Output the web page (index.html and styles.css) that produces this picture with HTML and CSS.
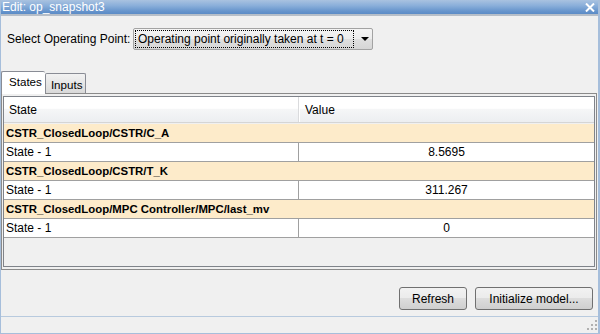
FILE: index.html
```html
<!DOCTYPE html>
<html>
<head>
<meta charset="utf-8">
<link rel="stylesheet" href="styles.css">
</head>
<body>
<div class="window">
  <div class="titlebar">
    <span class="title">Edit: op_snapshot3</span>
    <svg class="close" width="10" height="9" viewBox="0 0 10 9"><path d="M1 0.5 L9 8.5 M9 0.5 L1 8.5" stroke="#fff" stroke-width="2"/></svg>
  </div>
  <div class="body">
    <div class="op-row">
      <span class="op-label">Select Operating Point:</span>
      <div class="combo">
        <span class="combo-focus">Operating point originally taken at t = 0</span>
        <span class="combo-arrow"></span>
      </div>
    </div>
    <div class="tabs">
      <div class="tab active">States</div>
      <div class="tab">Inputs</div>
    </div>
    <div class="panel">
      <div class="grid">
        <div class="thead">
          <div class="th th-state">State</div>
          <div class="th th-value">Value</div>
        </div>
        <div class="group">CSTR_ClosedLoop/CSTR/C_A</div>
        <div class="row"><div class="cell">State - 1</div><div class="cell value">8.5695</div></div>
        <div class="group">CSTR_ClosedLoop/CSTR/T_K</div>
        <div class="row"><div class="cell">State - 1</div><div class="cell value">311.267</div></div>
        <div class="group">CSTR_ClosedLoop/MPC Controller/MPC/last_mv</div>
        <div class="row"><div class="cell">State - 1</div><div class="cell value">0</div></div>
      </div>
    </div>
    <div class="footer">
      <button class="btn btn-refresh">Refresh</button>
      <button class="btn btn-init">Initialize model...</button>
    </div>
  </div>
  <div class="statusbar">
    <svg class="grip" width="11" height="11" viewBox="0 0 11 11">
      <rect x="8" y="0" width="2" height="2" fill="#b0b0b0"/>
      <rect x="4" y="4" width="2" height="2" fill="#b0b0b0"/>
      <rect x="8" y="4" width="2" height="2" fill="#b0b0b0"/>
      <rect x="0" y="8" width="2" height="2" fill="#b0b0b0"/>
      <rect x="4" y="8" width="2" height="2" fill="#b0b0b0"/>
      <rect x="8" y="8" width="2" height="2" fill="#b0b0b0"/>
    </svg>
  </div>
</div>
</body>
</html>
```
FILE: styles.css
```css
html, body {
  margin: 0;
  padding: 0;
}
body {
  width: 600px;
  height: 334px;
  overflow: hidden;
  font-family: "Liberation Sans", Arial, sans-serif;
  font-size: 12px;
  color: #000;
  background: #f0f0f0;
}
.window {
  box-sizing: border-box;
  width: 600px;
  height: 334px;
  display: flex;
  flex-direction: column;
  border-left: 1px solid #a6bedb;
  border-right: 2px solid #a6bedb;
  border-bottom: 1px solid #a6bedb;
}
.titlebar {
  flex: none;
  height: 14px;
  border-bottom: 2px solid #b6bec8;
  background: linear-gradient(#a9c2e0, #8aafda 40%, #6694cc 80%, #5b8bc6);
  display: flex;
  align-items: center;
  justify-content: space-between;
  padding: 0 3px 0 1px;
  color: #fff;
  font-size: 12px;
}
.title {
  line-height: 14px;
}
.close {
  display: block;
  margin-top: 1px;
}
.body {
  flex: 1;
  display: flex;
  flex-direction: column;
}
.op-row {
  display: flex;
  align-items: center;
  margin-top: 12px;
  padding-left: 6px;
}
.op-label {
  width: 126px;
}
.combo {
  box-sizing: border-box;
  width: 240px;
  height: 22px;
  border: 1px solid #a3a3a3;
  border-radius: 2px;
  background: linear-gradient(#f4f4f4, #ececec 50%, #e0e0e0 50%, #d6d6d6);
  display: flex;
  align-items: center;
  padding: 1px;
}
.combo-focus {
  box-sizing: border-box;
  width: 219px;
  height: 18px;
  border: 1px dotted #000;
  padding-left: 2px;
  line-height: 16px;
  white-space: nowrap;
  overflow: hidden;
}
.combo-arrow {
  width: 0;
  height: 0;
  margin-left: 7px;
  border-top: 4px solid #000;
  border-left: 4px solid transparent;
  border-right: 4px solid transparent;
}
.tabs {
  display: flex;
  align-items: flex-end;
  height: 22px;
  margin-top: 21px;
  position: relative;
  z-index: 1;
}
.tab {
  box-sizing: border-box;
  height: 20px;
  border: 1px solid #898c95;
  border-bottom: none;
  border-radius: 2px 2px 0 0;
  padding: 3px 3px 0 5px;
  background: linear-gradient(#f2f2f2, #e6e6e6 50%, #d9d9d9);
  line-height: 16px;
  font-size: 11.6px;
}
.tab.active {
  height: 23px;
  margin-bottom: -1px;
  padding: 2px 3px 0 7px;
  background: #fff;
  border-right: none;
}
.panel {
  box-sizing: border-box;
  height: 177px;
  margin-right: 1px;
  border: 1px solid #8a8a8a;
  padding: 2px 1px 2px 1px;
  display: flex;
}
.grid {
  flex: 1;
  border: 1px solid #7f838a;
  background: #f0f0f0;
  display: flex;
  flex-direction: column;
}
.thead {
  display: flex;
  height: 25px;
  border-bottom: 1px solid #d5d5d5;
  margin-bottom: 1px;
  background: linear-gradient(#ffffff, #ffffff 45%, #f5f6f7 50%, #eceef1);
}
.th {
  line-height: 26px;
  padding-left: 5px;
}
.th-state {
  width: 289px;
  border-right: 1px solid #dadbdd;
}
.th-value {
  flex: 1;
  border-left: 1px solid #ffffff;
}
.group {
  height: 18px;
  line-height: 18px;
  border-bottom: 1px solid #a0a0a0;
  background: #fdebca;
  font-weight: bold;
  font-size: 11.4px;
  padding-left: 2px;
}
.row {
  display: flex;
  height: 18px;
  border-bottom: 1px solid #a0a0a0;
  background: #fff;
}
.cell {
  line-height: 18px;
  width: 292px;
  padding-left: 2px;
}
.cell.value {
  width: auto;
  flex: 1;
  padding-left: 0;
  border-left: 1px solid #a0a0a0;
  text-align: center;
}
.footer {
  display: flex;
  justify-content: flex-end;
  gap: 8px;
  margin-top: 17px;
  padding-right: 5px;
}
.btn {
  box-sizing: border-box;
  height: 23px;
  border: 1px solid #707070;
  border-radius: 3px;
  background: linear-gradient(#f2f2f2, #ebebeb 50%, #dddddd 50%, #cfcfcf);
  font-family: "Liberation Sans", Arial, sans-serif;
  font-size: 12px;
  color: #000;
  padding: 0;
}
.btn-refresh {
  width: 68px;
}
.btn-init {
  width: 118px;
}
.statusbar {
  margin-top: auto;
  flex: none;
  height: 16px;
  border-top: 1px solid #b8cade;
  display: flex;
  justify-content: flex-end;
  align-items: flex-end;
}
.grip {
  display: block;
  margin: 0 0 2px 0;
}
```
